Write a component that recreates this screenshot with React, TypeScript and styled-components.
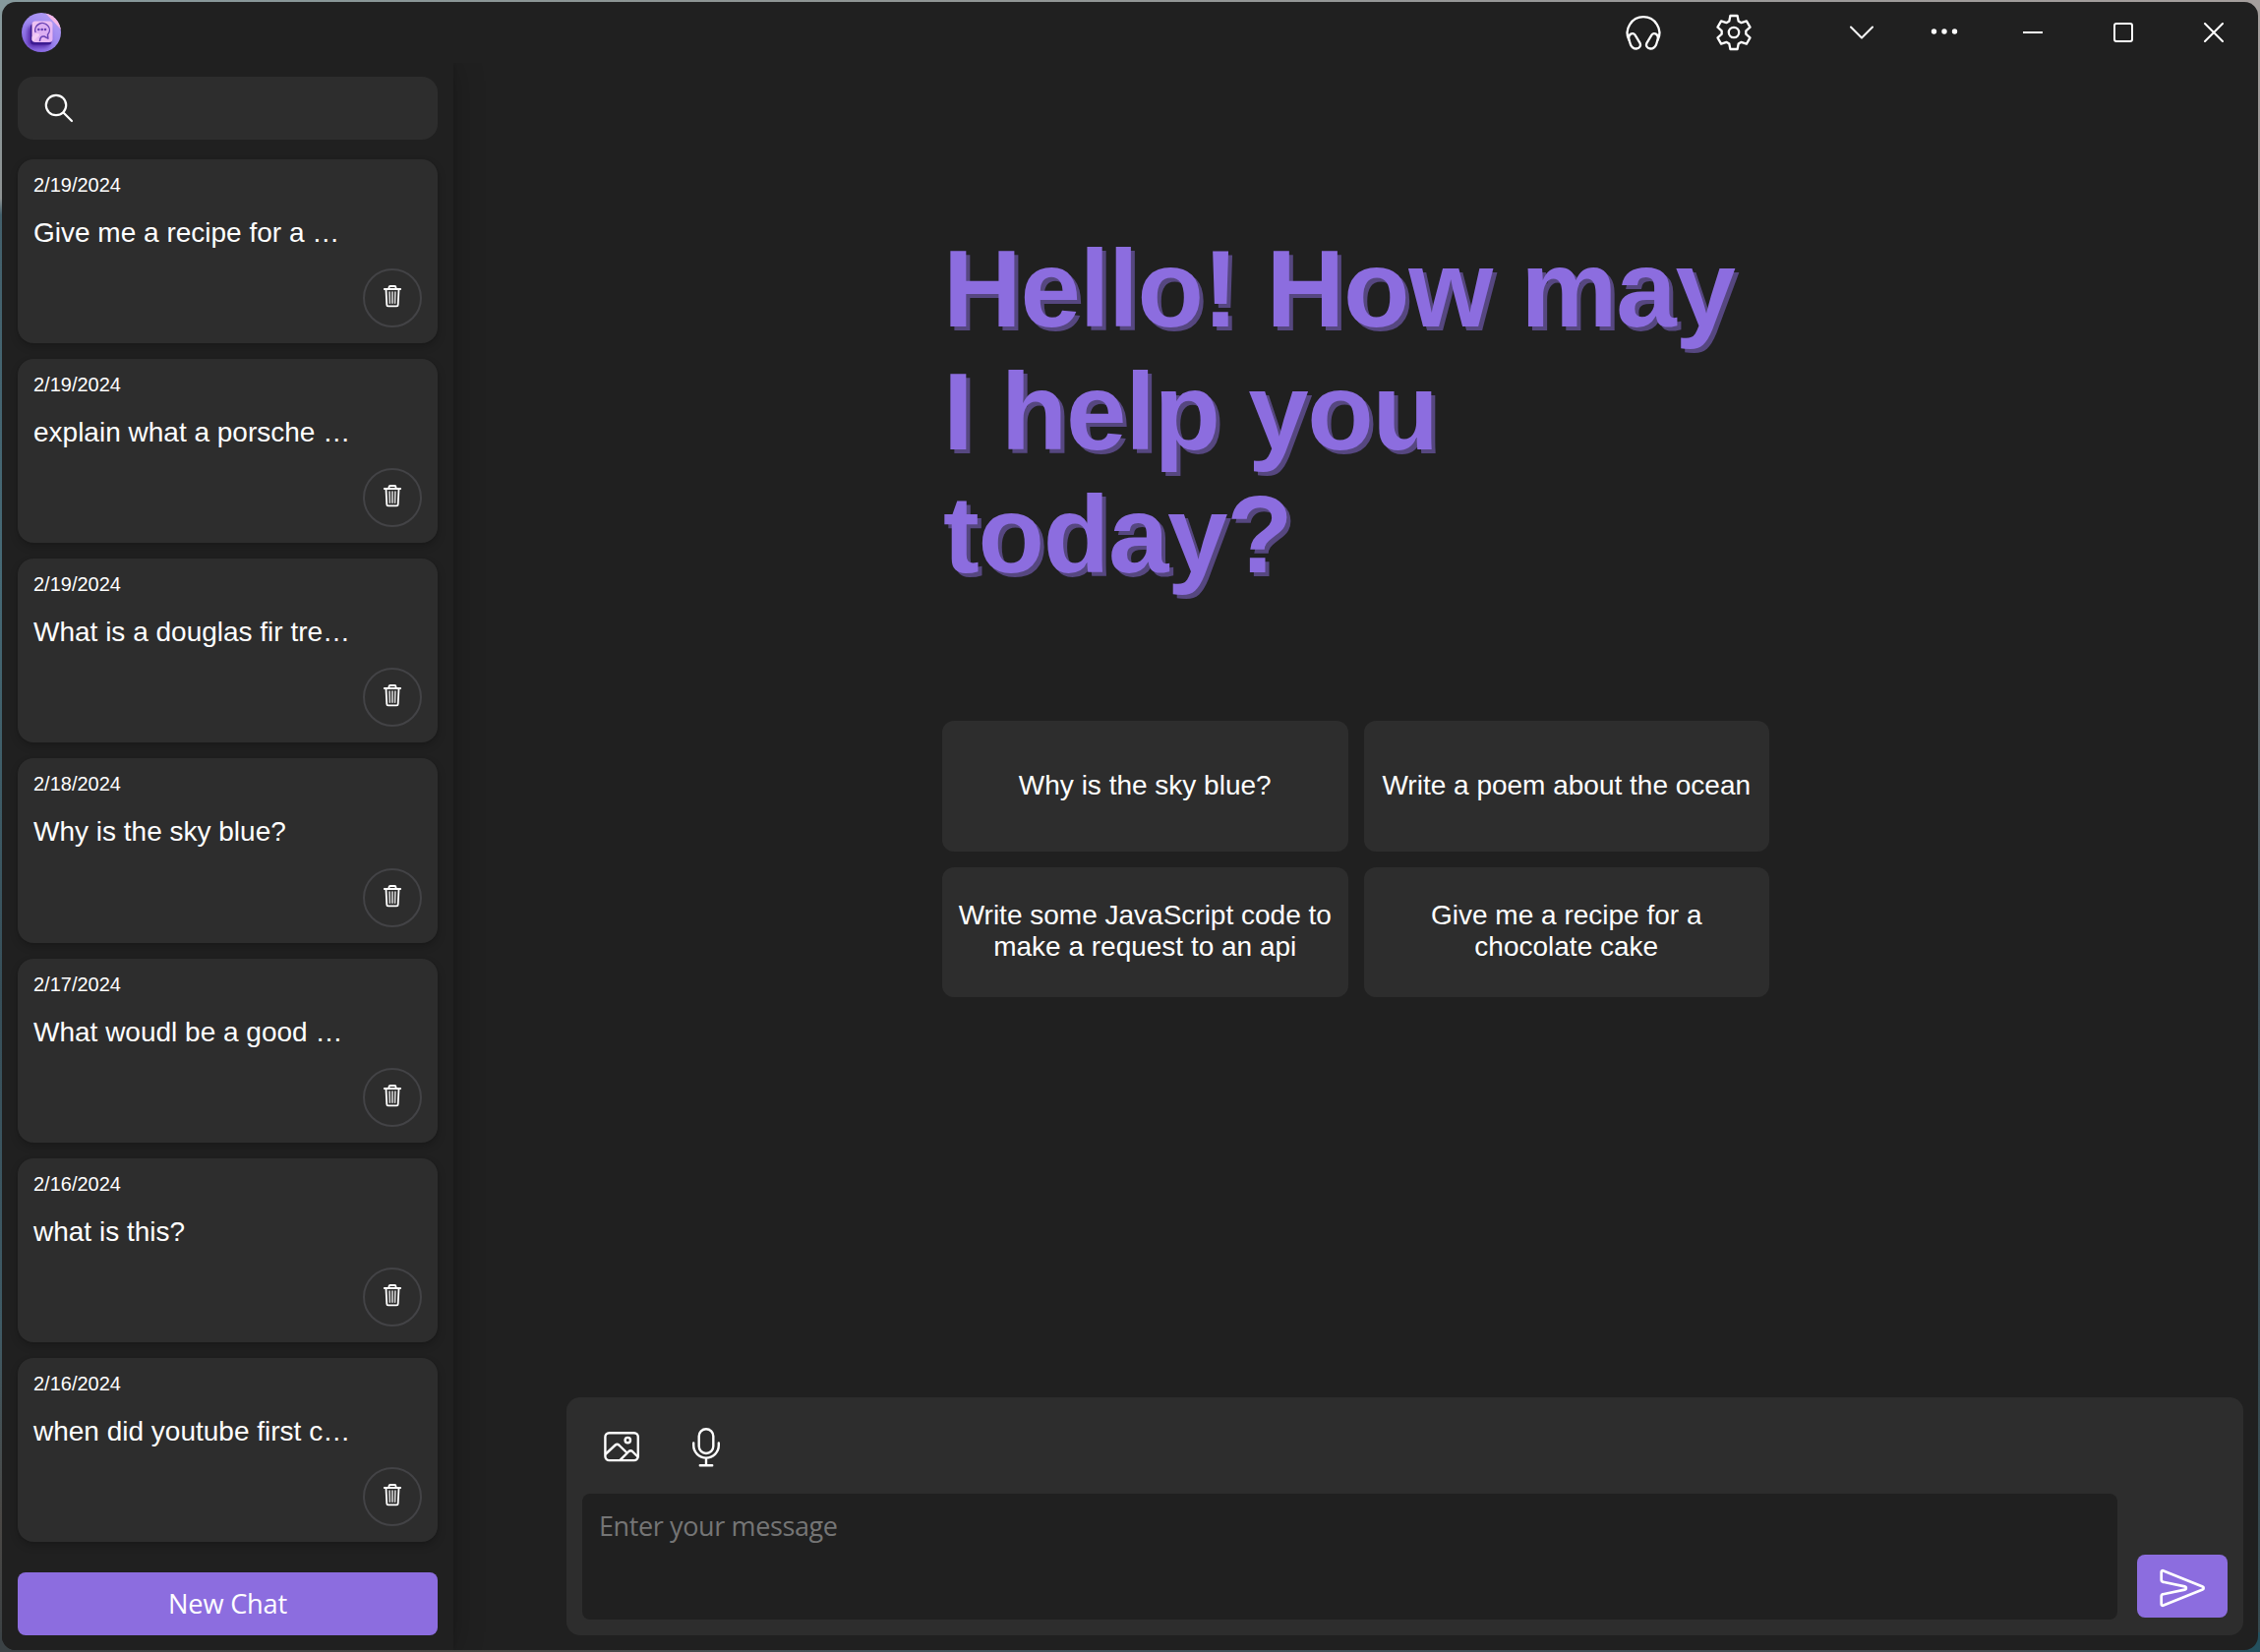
import React from "react";
import styled, { createGlobalStyle } from "styled-components";

const GlobalStyle = createGlobalStyle`
  * { box-sizing: border-box; }
  body {
    margin: 0;
    overflow: hidden;
    background: #202020;
    font-family: "Liberation Sans", Arial, sans-serif;
    color: #fff;
  }
  button { font-family: inherit; color: inherit; padding: 0; border: 0; }
`;

const Desktop = styled.div`
  width: 2298px;
  height: 1680px;
  padding: 2px 2px 2px 2px;
  background:
    linear-gradient(90deg, #86999c 0, #8d9594 30%, #989898 70%, #a59f9d 100%) top / 100% 20px no-repeat,
    linear-gradient(90deg, #3b4245 0, #4a4744 22%, #41525a 40%, #3f4d54 70%, #454a4e 88%, #23505e 100%) bottom / 100% 20px no-repeat,
    linear-gradient(180deg, #86999c 0, #8f9494 12%, #43606c 13%, #466a76 35%, #374f59 60%, #3f5b66 80%, #4a4744 92%, #3b4245 100%) left / 50% 100% no-repeat,
    linear-gradient(180deg, #a59f9d 0, #75797a 30%, #3c4d55 60%, #35494f 100%) right / 50% 100% no-repeat;
`;

const Window = styled.div`
  width: 100%;
  height: 100%;
  display: flex;
  flex-direction: column;
  overflow: hidden;
  border-radius: 14px;
  background: #202020;
`;

const TitleBar = styled.header`
  flex: none;
  height: 62px;
  display: flex;
  align-items: center;
  padding-left: 20px;
`;

const TitleActions = styled.div`
  display: flex;
  height: 100%;
  margin-left: auto;
  margin-right: 45px;
`;

const WindowControls = styled.div`
  display: flex;
  height: 100%;
`;

const BarButton = styled.button<{ $width: number }>`
  width: ${(p) => p.$width}px;
  height: 62px;
  display: flex;
  align-items: center;
  justify-content: center;
  background: transparent;
  svg { display: block; }
`;

const Body = styled.div`
  flex: 1;
  min-height: 0;
  display: flex;
  overflow: hidden;
`;

const Sidebar = styled.aside`
  flex: none;
  width: 459px;
  padding: 14px 16px 15px;
  display: flex;
  flex-direction: column;
  background: #202020;
  box-shadow: 0 0 4px rgba(0, 0, 0, 0.1), 0 0 30px rgba(0, 0, 0, 0.24);
`;

const SearchBox = styled.div`
  flex: none;
  height: 64px;
  display: flex;
  align-items: center;
  padding-left: 26px;
  border-radius: 16px;
  background: #2d2d2d;
`;

const ChatList = styled.div`
  flex: 1;
  display: flex;
  flex-direction: column;
  gap: 16px;
  margin: 20px 0 31px;
`;

const ChatCard = styled.article`
  flex: 1;
  min-height: 0;
  display: flex;
  flex-direction: column;
  padding: 15px 16px 16px;
  border-radius: 16px;
  background: #2d2d2d;
  box-shadow: 0 0 2px rgba(0, 0, 0, 0.12), 0 4px 8px rgba(0, 0, 0, 0.2);
`;

const ChatDate = styled.time`
  font-size: 20px;
  line-height: 23px;
`;

const ChatTitle = styled.div`
  margin-top: 21px;
  font-size: 28px;
  line-height: 32px;
  white-space: nowrap;
`;

const DeleteButton = styled.button`
  align-self: flex-end;
  margin-top: auto;
  width: 60px;
  height: 60px;
  display: flex;
  align-items: center;
  justify-content: center;
  padding-bottom: 4px;
  border: 2px solid #434346;
  border-radius: 50%;
  background: transparent;
  svg { display: block; }
`;

const NewChatButton = styled.button`
  flex: none;
  height: 64px;
  border-radius: 8px;
  background: #8c6ddf;
  font-family: "Open Sans", "Noto Sans", sans-serif;
  font-size: 27.2px;
  letter-spacing: -0.2px;
  line-height: 64px;
`;

const Main = styled.main`
  flex: 1;
  min-width: 0;
  display: flex;
  flex-direction: column;
  padding: 167px 15px 15px 115px;
`;

const Welcome = styled.section`
  width: 841px;
  margin-left: 382px;
`;

const Greeting = styled.h1`
  margin: 0;
  padding-left: 1px;
  font-size: 110.5px;
  letter-spacing: -1.3px;
  line-height: 125px;
  font-weight: 700;
  color: #8c6ddf;
  text-shadow: 4px 4px 0 rgba(140, 109, 223, 0.5);
  white-space: nowrap;
`;

const PromptGrid = styled.div`
  margin-top: 127px;
  display: grid;
  grid-template-columns: 1fr 1fr;
  grid-auto-rows: 132.5px;
  gap: 16px;
`;

const PromptCard = styled.button`
  display: flex;
  align-items: center;
  justify-content: center;
  padding-bottom: 1px;
  border-radius: 12px;
  background: #2d2d2d;
  font-size: 28px;
  line-height: 32px;
  text-align: center;
  white-space: nowrap;
`;

const Composer = styled.section`
  margin-top: auto;
  height: 242px;
  display: flex;
  justify-content: space-between;
  padding: 0 16px 16px;
  border-radius: 14px;
  background: #2d2d2d;
`;

const ComposerMain = styled.div`
  width: 1561px;
  display: flex;
  flex-direction: column;
`;

const Tools = styled.div`
  height: 98px;
  display: flex;
  align-items: center;
  gap: 40px;
  padding: 4px 0 0 20px;
  svg { display: block; }
`;

const MessageInput = styled.textarea`
  flex: 1;
  display: block;
  width: 100%;
  margin: 0;
  padding: 14px 17px;
  border: 0;
  border-radius: 8px;
  outline: 0;
  resize: none;
  background: #202020;
  color: #fff;
  font-family: "Open Sans", "Noto Sans", sans-serif;
  font-size: 27px;
  letter-spacing: -0.38px;
  line-height: 38px;
  &::placeholder { color: #757575; opacity: 1; }
`;

const SendButton = styled.button`
  align-self: flex-end;
  width: 92px;
  height: 64px;
  margin-bottom: 2px;
  display: flex;
  align-items: center;
  justify-content: center;
  border-radius: 8px;
  background: #8c6ddf;
  svg { display: block; }
`;

const Logo = () => (
  <svg width="40" height="40" viewBox="0 0 40 40">
    <defs>
      <linearGradient id="disc" x1="0" y1="1" x2="0.7" y2="0">
        <stop offset="0" stopColor="#7a55d8" />
        <stop offset="0.5" stopColor="#9a83ee" />
        <stop offset="1" stopColor="#b09cf5" />
      </linearGradient>
      <linearGradient id="tile" x1="0" y1="0" x2="1" y2="1">
        <stop offset="0" stopColor="#efc4f2" />
        <stop offset="1" stopColor="#e3b2f3" />
      </linearGradient>
      <clipPath id="round"><circle cx="20" cy="20" r="20" /></clipPath>
      <filter id="soft" x="-30%" y="-30%" width="160%" height="160%"><feGaussianBlur stdDeviation="2" /></filter>
    </defs>
    <g clipPath="url(#round)">
      <rect width="40" height="40" fill="url(#disc)" />
      <path d="M24 0 41 18V0z" fill="#f5b8e6" />
      <rect x="6" y="13" width="23" height="22" rx="5" fill="#5429a8" filter="url(#soft)" />
      <rect x="9" y="11" width="21.5" height="21.5" rx="3.5" fill="#3c1b92" />
      <rect x="10.5" y="8.5" width="21" height="21.5" rx="3.5" fill="url(#tile)" />
      <path d="M14.2 20a7.300 7 0 1 1 12.300 2.200l.4 4-4-2.200c-2.500-.4-4 .6-4.500 5" fill="#dcaff2" stroke="#6a43b5" strokeWidth="1.500" strokeLinejoin="round" />
      <path d="M10.500 24.500c2-1.500 3.500-4 6-3.500s1.600 2.600 0 3.600-3 2-4 4.200l-2-.5z" fill="#f3cdf5" />
      <circle cx="17.300" cy="17" r="1.300" fill="#6a43b5" />
      <circle cx="20.700" cy="17" r="1.300" fill="#6a43b5" />
      <circle cx="24" cy="17" r="1.300" fill="#6a43b5" />
    </g>
  </svg>
);

const Line = ({ w, h, sw = 2, children }: { w: number; h: number; sw?: number; children: React.ReactNode }) => (
  <svg width={w} height={h} viewBox={`0 0 ${w} ${h}`} fill="none" stroke="#fff" strokeWidth={sw} strokeLinecap="round" strokeLinejoin="round">
    {children}
  </svg>
);

const HeadphonesIcon = () => (
  <Line w={40} h={40} sw={2.3}>
    <path d="M5.300 27.500A16.300 16.300 0 1 1 34.700 27.500" />
    <path d="M5.300 27 7 32.500C8.300 35.300 10.500 36.600 13 36.500 16.300 36.200 17.800 33.400 16.600 30.800L11.600 22.600C10.600 21 8.500 20.600 6.900 21.700 4.900 23.100 4.800 25 5.300 27z" />
    <path d="M34.700 27 33 32.500C31.700 35.300 29.500 36.600 27 36.500 23.700 36.200 22.200 33.400 23.400 30.800L28.400 22.600C29.400 21 31.500 20.600 33.100 21.700 35.100 23.100 35.200 25 34.700 27z" />
  </Line>
);

const GearIcon = () => (
  <Line w={40} h={40} sw={2.3}>
    <path d="M16.400 3h7.200l1.100 5.500 2.900 1.700 5.300-1.800 3.600 6.200-4.200 3.700v3.400l4.200 3.700-3.600 6.200-5.300-1.800-2.900 1.700L23.600 37h-7.200l-1.100-5.500-2.900-1.700-5.300 1.800-3.600-6.200 4.200-3.700v-3.400l-4.200-3.700 3.600-6.200 5.300 1.800 2.900-1.700z" />
    <circle cx="20" cy="20" r="5.200" />
  </Line>
);

const SearchIcon = () => (
  <Line w={32} h={32} sw={2.2}>
    <circle cx="13" cy="13" r="10.200" />
    <path d="M20.500 20.500 29 29" />
  </Line>
);

const TrashIcon = () => (
  <Line w={20} h={26} sw={1.8}>
    <path d="M1.800 6h16.400M6.500 5.600V4.200c0-.7.500-1.200 1.200-1.200h4.600c.7 0 1.200.5 1.200 1.200v1.400M3.500 6.500l.8 15.600c0 .8.600 1.300 1.400 1.300h8.600c.8 0 1.400-.5 1.400-1.300l.8-15.600" />
    <path d="M7.100 9l.3 11.300M10 9v11.300M12.900 9l-.3 11.300" stroke="#d2d2d2" strokeWidth="1.600" />
  </Line>
);

const ImageIcon = () => (
  <Line w={44} h={44} sw={2.400}>
    <rect x="3.400" y="7.300" width="33.400" height="27.800" rx="4" />
    <circle cx="26.300" cy="14.600" r="2.700" />
    <path d="M4 28.500 13.700 19.500c1.200-1.100 2.400-1.100 3.600 0L24.500 26.500M18.500 34.800 27.400 26c1.200-1.100 2.400-1.100 3.600 0L36 31" />
  </Line>
);

const MicIcon = () => (
  <Line w={44} h={44} sw={2.400}>
    <rect x="14.700" y="3.200" width="14.600" height="24.800" rx="7.300" />
    <path d="M9.200 17.500v2.300a12.800 12.800 0 0 0 25.600 0v-2.300M22 32.800v7.400M15.800 40.200h12.400" />
  </Line>
);

const SendIcon = () => (
  <Line w={48} h={48} sw={2.700}>
    <path d="M2.700 9.800v7.800c0 1.200.7 2 1.800 2.200L26.500 24.400c1.900.4 1.900 2.800 0 3.200L4.500 32.200c-1.100.2-1.800 1-1.800 2.200v7.800c0 1.300 1 1.900 2.200 1.400L44.600 27.600c1.400-.6 1.400-2.600 0-3.200L4.900 8.400C3.700 7.900 2.700 8.500 2.700 9.800z" />
  </Line>
);

const chats = [
  ["2/19/2024", "Give me a recipe for a …"],
  ["2/19/2024", "explain what a porsche …"],
  ["2/19/2024", "What is a douglas fir tre…"],
  ["2/18/2024", "Why is the sky blue?"],
  ["2/17/2024", "What woudl be a good …"],
  ["2/16/2024", "what is this?"],
  ["2/16/2024", "when did youtube first c…"],
];

const prompts = [
  ["Why is the sky blue?"],
  ["Write a poem about the ocean"],
  ["Write some JavaScript code to", "make a request to an api"],
  ["Give me a recipe for a", "chocolate cake"],
];

const greeting = ["Hello! How may", "I help you", "today?"];

const Lines = ({ lines }: { lines: string[] }) => (
  <>
    {lines.map((line, i) => (
      <React.Fragment key={line}>
        {i > 0 && <br />}
        {line}
      </React.Fragment>
    ))}
  </>
);

export default function App() {
  return (
    <Desktop>
      <GlobalStyle />
      <Window>
        <TitleBar>
          <Logo />
          <TitleActions>
            <BarButton $width={92}><HeadphonesIcon /></BarButton>
            <BarButton $width={92}><GearIcon /></BarButton>
          </TitleActions>
          <WindowControls>
            <BarButton $width={78}>
              <Line w={26} h={26}><path d="m2 7.500 11 11 11-11" /></Line>
            </BarButton>
            <BarButton $width={90}>
              <svg width="28" height="28" viewBox="0 0 28 28" fill="#fff">
                <circle cx="3.500" cy="13" r="2.700" />
                <circle cx="14" cy="13" r="2.700" />
                <circle cx="24.500" cy="13" r="2.700" />
              </svg>
            </BarButton>
            <BarButton $width={90}>
              <Line w={20} h={20}><path d="M0 10h20" strokeLinecap="butt" /></Line>
            </BarButton>
            <BarButton $width={94}>
              <Line w={20} h={20}><rect x="1" y="1" width="18" height="18" rx="2" /></Line>
            </BarButton>
            <BarButton $width={90}>
              <Line w={20} h={20}><path d="m1 1 18 18M19 1 1 19" /></Line>
            </BarButton>
          </WindowControls>
        </TitleBar>
        <Body>
          <Sidebar>
            <SearchBox><SearchIcon /></SearchBox>
            <ChatList>
              {chats.map(([date, title]) => (
                <ChatCard key={title}>
                  <ChatDate>{date}</ChatDate>
                  <ChatTitle>{title}</ChatTitle>
                  <DeleteButton><TrashIcon /></DeleteButton>
                </ChatCard>
              ))}
            </ChatList>
            <NewChatButton>New Chat</NewChatButton>
          </Sidebar>
          <Main>
            <Welcome>
              <Greeting><Lines lines={greeting} /></Greeting>
              <PromptGrid>
                {prompts.map((lines) => (
                  <PromptCard key={lines[0]}>
                    <span><Lines lines={lines} /></span>
                  </PromptCard>
                ))}
              </PromptGrid>
            </Welcome>
            <Composer>
              <ComposerMain>
                <Tools><ImageIcon /><MicIcon /></Tools>
                <MessageInput placeholder="Enter your message" />
              </ComposerMain>
              <SendButton><SendIcon /></SendButton>
            </Composer>
          </Main>
        </Body>
      </Window>
    </Desktop>
  );
}
